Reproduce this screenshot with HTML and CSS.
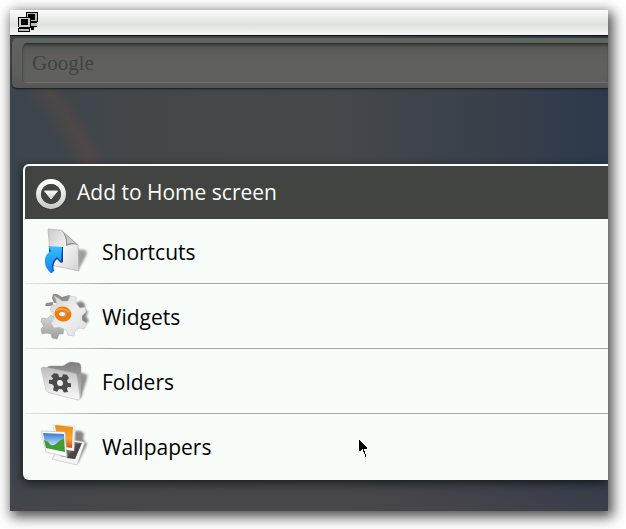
FILE: index.html
```
<!DOCTYPE html>
<html lang="en">
<head>
  <meta charset="utf-8">
  <title>Home screen</title>
  <link rel="stylesheet" href="styles.css">
</head>
<body>
  <div class="screen">
    <header class="status-bar">
      <svg class="status-icon" width="20" height="20" viewBox="0 0 20 20" shape-rendering="crispEdges">
        <path fill="#000" d="M8 0h12v10h-1v5h-3v3h-3v-3H8z"/>
        <path fill="#bbb" d="M9 1h10v8H9zM13 11h6v3h-6z"/>
        <path fill="#000" d="M10 2h7v6h-7z"/>
        <path fill="#000" d="M0 5h13v11h-1v4H0v-4h1v-1H0z"/>
        <path fill="#ccc" d="M1 6h11v9H1z"/>
        <path fill="#000" d="M3 7h7v6H3z"/>
        <path fill="#bbb" d="M1 17h10v2H1z"/>
      </svg>
    </header>

    <form class="search">
      <input class="search-box" type="text" placeholder="Google" aria-label="Search">
    </form>

    <section class="dialog">
      <h1 class="dialog-title">
        <svg class="title-icon" width="32" height="32" viewBox="0 0 32 32">
          <defs>
            <linearGradient id="ring" x2="0" y2="1">
              <stop offset="0" stop-color="#fff"/>
              <stop offset="1" stop-color="#ccc"/>
            </linearGradient>
          </defs>
          <circle cx="16" cy="18" r="15" fill="#343634"/>
          <circle cx="16" cy="17" r="12.5" fill="none" stroke="url(#ring)" stroke-width="5"/>
          <circle cx="16" cy="17" r="10" fill="#424441"/>
          <path d="M9.5 14h13L16 22z" fill="url(#ring)" stroke="#e8e8e8" stroke-linejoin="round"/>
        </svg>
        Add to Home screen
      </h1>
      <ul class="menu">
        <li>
          <button class="item" type="button">
            <svg width="50" height="50" viewBox="0 0 50 50">
              <defs>
                <linearGradient id="paper" x1="0" y1="0" x2="1" y2="1">
                  <stop offset="0" stop-color="#c9c9c9"/>
                  <stop offset=".5" stop-color="#f4f4f4"/>
                  <stop offset="1" stop-color="#d2d2d2"/>
                </linearGradient>
                <linearGradient id="arrow" x2="0" y2="1">
                  <stop offset="0" stop-color="#35c0ff"/>
                  <stop offset="1" stop-color="#1683ee"/>
                </linearGradient>
                <filter id="soft" x="-40%" y="-40%" width="180%" height="180%"><feGaussianBlur stdDeviation="1.2"/></filter>
              </defs>
              <path d="M35 22l10 1q3 2 1 6l-7 13-4 1z" fill="#777" opacity=".7" filter="url(#soft)"/>
              <path d="M8 2l13 1 17 15 1 26-28-6z" fill="url(#paper)" stroke="#aaa" stroke-width=".6"/>
              <path d="M21 3l17 15q-6-2-12 1 1-10-5-16z" fill="#8e8e8e"/>
              <path d="M22 4q6 5 5 13 5-2 9 0z" fill="#c9c9c9"/>
              <path d="M9 20h14v15l-2 1-4-4q-5 5-3 12l-3 2q-7-7-4-15l2-5z" fill="#0846b8"/>
              <path d="M8 19l14 1-1 14-4-4q-7 5-4 15l-2 1q-7-6-6-13 0-6 6-9z" fill="url(#arrow)"/>
            </svg>
            Shortcuts
          </button>
        </li>
        <li>
          <button class="item" type="button">
            <svg width="50" height="50" viewBox="0 0 50 50">
              <defs>
                <linearGradient id="gear" x1="0" y1="0" x2="1" y2="1">
                  <stop offset="0" stop-color="#d4d4d4"/>
                  <stop offset=".5" stop-color="#f0f0f0"/>
                  <stop offset="1" stop-color="#dcdcdc"/>
                </linearGradient>
                <linearGradient id="gear-small" x2="0" y2="1">
                  <stop offset="0" stop-color="#d8d8d8"/>
                  <stop offset="1" stop-color="#9c9c9c"/>
                </linearGradient>
              </defs>
              <path d="M36 11l5-2 4 3 0 5 3 3-2 4 3 5-7 5-8-2z" fill="#666" opacity=".8" filter="url(#soft)"/>
              <path d="M6 11l7-1 0 4-8 0zM12 6l1-4 4 0 5 3 7-2 6 4-6 5-15-1z" fill="#8f8f8f"/>
              <path d="M2 26l5 1 4-4 10 6 3 7-1 6-4 0-2 5-5-1-1-4-5-1-4 1-1-5 3-3-3-4z" fill="url(#gear-small)" stroke="#999" stroke-width=".5"/>
              <path d="M14 4l4 2 4 3 6 0 2-5 6 1 0 6 4 5 5-1 1 5-4 4 0 4 5 4-3 5-5-1-4 3-1 5-6-1-2-5-7-3-5 1-3-5 3-4-1-5-3-4 2-5 5 0-1-5z" fill="url(#gear)" stroke="#bbb" stroke-width=".5"/>
              <ellipse cx="23" cy="22" rx="6" ry="5" transform="rotate(15 23 22)" fill="#a4a4a4" stroke="#f27a08" stroke-width="5"/>
              <path d="M16 19q6-5 13 1" fill="none" stroke="#ffa02d" stroke-width="2"/>
              <ellipse cx="22" cy="22" rx="3" ry="2" fill="#eee"/>
            </svg>
            Widgets
          </button>
        </li>
        <li>
          <button class="item" type="button">
            <svg width="50" height="50" viewBox="0 -2 50 50">
              <defs>
                <linearGradient id="folder" x2="0" y2="1">
                  <stop offset="0" stop-color="#bdbdbd"/>
                  <stop offset="1" stop-color="#fbfbfb"/>
                </linearGradient>
                <linearGradient id="folder-back" x2="0" y2="1">
                  <stop offset="0" stop-color="#7d7d7d"/>
                  <stop offset="1" stop-color="#c8c8c8"/>
                </linearGradient>
              </defs>
              <path d="M38 13l8 2q2 1 1 5l-6 19-4 1z" fill="#666" opacity=".7" filter="url(#soft)"/>
              <path d="M7 9q0-2 4-2l12 0 5-3q1-1 4-1l7 1q2 1 2 4l0 29-3 2z" fill="url(#folder-back)" stroke="#999" stroke-width=".5"/>
              <path d="M1 10q0-2 3-2l29 6q4 0 4 4l3 19q0 4-2 4L10 34q-3-1-4-3z" fill="url(#folder)" stroke="#bbb" stroke-width=".6"/>
              <g transform="translate(20 24) skewY(7)" fill="#4a4a4a">
                <path d="M-6-9h4l1 3h3l1-3h4l2 3-2 3 1 2h3v4H8L7 5l1 3-4 1-2-3h-3l-2 3-4-1 1-4-2-2h-3v-4h3l1-2-2-2z"/>
                <circle r="3" fill="#eee"/>
              </g>
            </svg>
            Folders
          </button>
        </li>
        <li>
          <button class="item" type="button">
            <svg width="50" height="50" viewBox="0 -1 50 50">
              <defs>
                <linearGradient id="sky" x2="0" y2="1">
                  <stop offset="0" stop-color="#3478d2"/>
                  <stop offset=".7" stop-color="#cfe9ff"/>
                </linearGradient>
                <linearGradient id="sunset" x2="0" y2="1">
                  <stop offset="0" stop-color="#f08a10"/>
                  <stop offset=".6" stop-color="#fba531"/>
                  <stop offset="1" stop-color="#d9480c"/>
                </linearGradient>
              </defs>
              <path d="M35 8q7-1 9 3l-1 5 4 5-9 19-5-2z" fill="#555" opacity=".7" filter="url(#soft)"/>
              <path d="M26 16l19 3-8 23-25-6z" fill="#f5f5f5" stroke="#bbb" stroke-width=".6"/>
              <path d="M26 18l16 2-7 16-15-3z" fill="#656565"/>
              <path d="M27 35l10-14 4 0-6 15z" fill="#474747"/>
              <path d="M13 2l22 1-1 25-18-3z" fill="#f7f7f7" stroke="#ccc" stroke-width=".5"/>
              <path d="M15 2l18 2-1 21-14-2z" fill="url(#sunset)"/>
              <path d="M1 8l24 1 2 25L6 29z" fill="#fff" stroke="#bbb" stroke-width=".7"/>
              <path d="M3 10l21 1 1 18L6 25z" fill="url(#sky)"/>
              <path d="M4 17q4 1 7 5 3 1 6-2 4-4 7-4l1 13L6 25z" fill="#3f9d35"/>
            </svg>
            Wallpapers
          </button>
        </li>
      </ul>
      <svg class="cursor" width="10" height="18" viewBox="0 0 10 18" shape-rendering="crispEdges">
        <path d="M1 0v11h1l2-2h1v3h1v2h1v3h1v-3H7v-3H6V9h3V8z"/>
      </svg>
    </section>
  </div>
</body>
</html>
```
FILE: styles.css
```
* {
  box-sizing: border-box;
}
body {
  margin: 0;
  padding: 10px 18px 18px 10px;
  background: #fff;
  font-family: "Open Sans", "Noto Sans", sans-serif;
  color: #000;
}
.screen {
  padding-bottom: 31px;
  background:
    radial-gradient(circle at -200px 280px, transparent 290px, rgba(110, 72, 62, 0.35) 310px, transparent 324px) 0 0 / 100% 180px no-repeat,
    linear-gradient(transparent 85%, rgba(80, 70, 74, 0.4)),
    linear-gradient(90deg, #3b454d 0%, #43474a 20%, #44484b 55%, #3b414a 78%, #2c394b 100%);
  box-shadow: 3px 4px 12px 2px rgba(0, 0, 0, 0.7);
}
.status-bar {
  height: 26px;
  padding: 2px 8px;
  background: linear-gradient(#fafcfa, #dfe1df 60%, #f6f8f6);
  border-bottom: 1px solid #0c1014;
}
.status-icon {
  display: block;
}
.search {
  margin: 2px 0 0 2px;
  padding: 5px 0 5px 10px;
  background: linear-gradient(#60645f, #5c605d 70%, #565656);
  border-radius: 5px 0 0 5px;
  box-shadow: 0 1px 2px #16191c;
  clip-path: inset(-3px 0 -3px -2px);
}
.search-box {
  display: block;
  width: 100%;
  height: 40px;
  padding: 0 9px;
  border: 1px solid #4c504e;
  border-top-color: #2d302e;
  border-right: none;
  border-bottom-color: #6c706d;
  border-radius: 5px 0 0 5px;
  background: linear-gradient(#545855, #5f5d5d 30%, #5e625f 60%, #605e5e);
  box-shadow: inset 0 2px 2px rgba(30, 34, 32, 0.4);
  font-family: "Liberation Serif", serif;
  font-size: 21px;
  color: #414341;
  outline: none;
}
.search-box::placeholder {
  color: #414341;
  opacity: 1;
}
.dialog {
  position: relative;
  margin: 76px 0 0 13px;
  border: 2px solid #f8fdf9;
  border-right: none;
  border-radius: 6px 0 0 6px;
  background: #f8fdf9;
  box-shadow: -1px 3px 10px rgba(10, 18, 18, 0.8);
  clip-path: inset(-16px 0 -16px -13px);
}
.dialog-title {
  display: flex;
  align-items: center;
  gap: 10px;
  height: 53px;
  margin: 0;
  padding: 0 10px 2px;
  border-radius: 4px 0 0 0;
  background: #424441;
  font-size: 21px;
  font-weight: normal;
  color: #f8fdf9;
}
.title-icon {
  margin-top: 2px;
}
.menu {
  margin: 0;
  padding: 0;
  list-style: none;
}
.menu li + li {
  border-top: 1px solid;
  border-image: linear-gradient(90deg, #e4e8e5, #a4a8a5 15%) 1;
}
.item {
  display: flex;
  align-items: center;
  gap: 12px;
  width: 100%;
  height: 64px;
  padding: 2px 15px 0;
  border: none;
  background: none;
  font: inherit;
  font-size: 21px;
  color: #000;
  text-align: left;
}
.cursor {
  position: absolute;
  left: 333px;
  top: 274px;
}
```
